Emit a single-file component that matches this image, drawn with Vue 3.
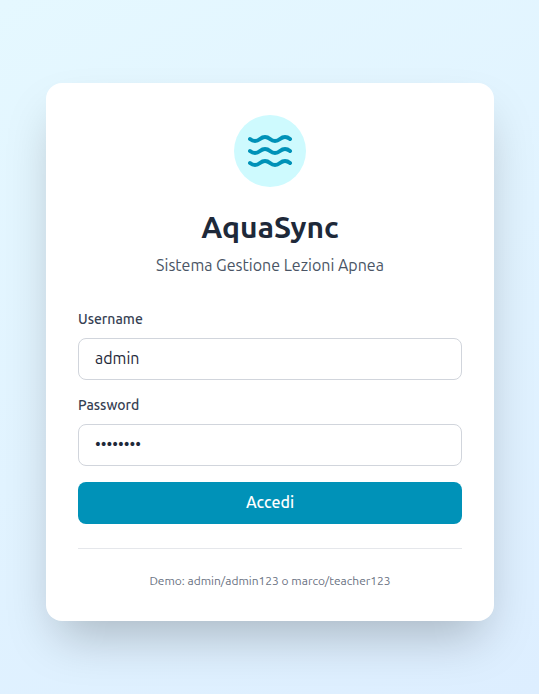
<script setup>
import { ref } from 'vue'

const username = ref('admin')
const password = ref('admin123')
</script>

<template>
  <main class="page">
    <section class="card">
      <header class="header">
        <div class="logo">
          <svg width="48" height="48" viewBox="0 0 24 24" fill="none" stroke="currentColor" stroke-width="2" stroke-linecap="round" stroke-linejoin="round">
            <path d="M2 6c.6.5 1.2 1 2.5 1C7 7 7 5 9.5 5c2.6 0 2.4 2 5 2 2.5 0 2.5-2 5-2 1.3 0 1.9.5 2.5 1" />
            <path d="M2 12c.6.5 1.2 1 2.5 1 2.5 0 2.5-2 5-2 2.6 0 2.4 2 5 2 2.5 0 2.5-2 5-2 1.3 0 1.9.5 2.5 1" />
            <path d="M2 18c.6.5 1.2 1 2.5 1 2.5 0 2.5-2 5-2 2.6 0 2.4 2 5 2 2.5 0 2.5-2 5-2 1.3 0 1.9.5 2.5 1" />
          </svg>
        </div>
        <h1>AquaSync</h1>
        <p class="subtitle">Sistema Gestione Lezioni Apnea</p>
      </header>
      <form class="form" @submit.prevent>
        <div class="field">
          <label for="username">Username</label>
          <input id="username" v-model="username" type="text" />
        </div>
        <div class="field">
          <label for="password">Password</label>
          <input id="password" v-model="password" type="password" />
        </div>
        <button type="submit">Accedi</button>
      </form>
      <footer class="footer">
        <p>Demo: admin/admin123 o marco/teacher123</p>
      </footer>
    </section>
  </main>
</template>

<style>
body {
  margin: 0;
}
</style>

<style scoped>
* {
  box-sizing: border-box;
  margin: 0;
}
.page {
  height: 694px;
  padding: 83px 45px 0 46px;
  overflow: hidden;
  background: linear-gradient(152deg, #e5f8ff, #ddeeff);
  font-family: Ubuntu, "Noto Sans", "Open Sans", sans-serif;
  color: #1e2939;
}
.card {
  width: 448px;
  height: 538px;
  padding: 32px;
  border-radius: 16px;
  background: #fff;
  box-shadow: 0 25px 50px -12px rgba(0, 0, 0, 0.25);
}
.header {
  display: flex;
  flex-direction: column;
  align-items: center;
  margin-bottom: 32px;
}
.logo {
  display: flex;
  padding: 12px;
  margin-bottom: 22px;
  border-radius: 50%;
  background: #cefafe;
  color: #0092b8;
}
h1 {
  font-size: 30px;
  line-height: 36px;
  font-weight: 700;
  margin-bottom: 8px;
  white-space: nowrap;
}
.subtitle {
  font-size: 16px;
  line-height: 24px;
  color: #4a5565;
  white-space: nowrap;
}
.form {
  display: flex;
  flex-direction: column;
  gap: 16px;
}
.field {
  display: flex;
  flex-direction: column;
  align-items: flex-start;
  gap: 9px;
}
label {
  font-size: 14px;
  line-height: 20px;
  font-weight: 500;
  color: #364153;
}
input {
  width: 100%;
  height: 42px;
  padding: 7px 16px 9px;
  border: 1px solid #d1d5dc;
  border-radius: 8px;
  outline: none;
  background: #fff;
  font: 400 16px/24px Ubuntu, "Noto Sans", "Open Sans", sans-serif;
  color: #1e2939;
}
.field + .field {
  margin-top: -1px;
}
button {
  height: 42px;
  padding: 8px 16px 10px;
  border: 0;
  border-radius: 8px;
  background: #0092b8;
  color: #fff;
  font: 500 16px/24px Ubuntu, "Noto Sans", "Open Sans", sans-serif;
}
.footer {
  margin-top: 24px;
  padding-top: 24px;
  border-top: 1px solid #e5e7eb;
  text-align: center;
  font-size: 12px;
  line-height: 16px;
  color: #6a7282;
}
</style>
